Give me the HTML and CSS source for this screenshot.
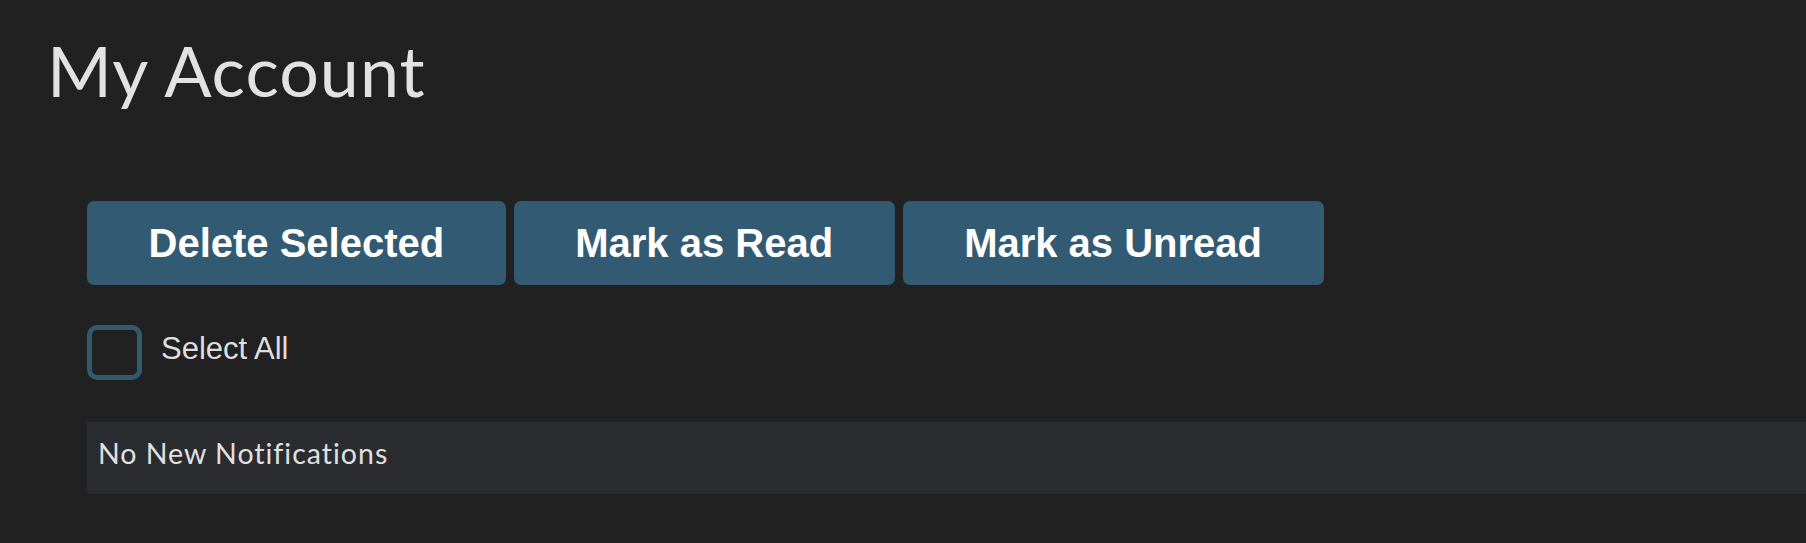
FILE: index.html
```html
<!DOCTYPE html>
<html lang="en">
<head>
<meta charset="utf-8">
<title>My Account</title>
<link rel="stylesheet" href="styles.css">
</head>
<body>
<header class="page-header">
  <h1 class="page-title">My Account</h1>
</header>
<main class="content">
  <div class="actions">
    <button class="btn" type="button">Delete Selected</button>
    <button class="btn" type="button">Mark as Read</button>
    <button class="btn" type="button">Mark as Unread</button>
  </div>
  <label class="select-all">
    <span class="checkbox"></span>
    <span class="select-label">Select All</span>
  </label>
  <div class="notice">No New Notifications</div>
</main>
</body>
</html>
```
FILE: styles.css
```css
html, body {
  margin: 0;
  padding: 0;
  background: #212121;
  height: 100%;
}
body {
  font-family: "Liberation Sans", Arial, sans-serif;
  color: #e0e0e0;
  overflow: hidden;
}
.page-header {
  padding: 28px 0 0 47px;
}
.page-title {
  margin: 0;
  font-family: "Lato", "Liberation Sans", sans-serif;
  font-weight: 400;
  font-size: 70px;
  line-height: 84px;
  letter-spacing: 1px;
  color: #e2e2e2;
}
.content {
  padding: 89px 0 0 87px;
}
.actions {
  display: flex;
  gap: 8px;
}
.btn {
  height: 84px;
  padding: 0 61.5px;
  border: none;
  border-radius: 7px;
  background: #325a73;
  color: #ffffff;
  font-family: "Liberation Sans", Arial, sans-serif;
  font-weight: 700;
  font-size: 40px;
  cursor: pointer;
}
.select-all {
  display: flex;
  align-items: flex-start;
  margin-top: 40px;
}
.checkbox {
  box-sizing: border-box;
  width: 55px;
  height: 55px;
  border: 5px solid #33596f;
  border-radius: 10px;
}
.select-label {
  margin: 7px 0 0 19px;
  font-size: 31px;
  line-height: 34px;
  color: #dedede;
}
.notice {
  margin-top: 42px;
  height: 72px;
  box-sizing: border-box;
  padding: 0 0 10px 11px;
  background: #2a2c30;
  font-family: "Lato", "Liberation Sans", sans-serif;
  font-size: 28.5px;
  line-height: 62px;
  letter-spacing: 1px;
  color: #e0e0e0;
}
```
